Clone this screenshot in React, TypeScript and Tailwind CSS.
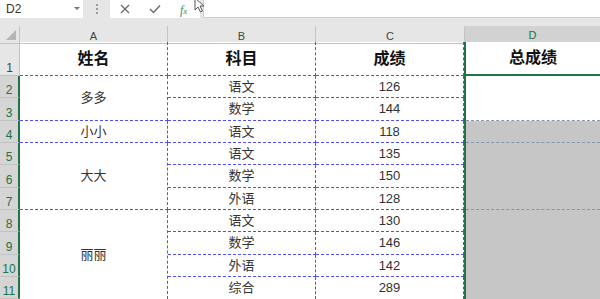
import React from "react";

type Cell = { cls: string; text?: string; bold?: boolean };

const rowNums = [
  "row-start-1",
  "row-start-2",
  "row-start-3",
  "row-start-4",
  "row-start-5",
  "row-start-6",
  "row-start-7",
  "row-start-8",
  "row-start-9",
  "row-start-10",
  "row-start-11",
];

const subjects = ["科目", "语文", "数学", "语文", "语文", "数学", "外语", "语文", "数学", "外语", "综合"];
const scores = ["成绩", "126", "144", "118", "135", "150", "128", "130", "146", "142", "289"];

function DCell({ cls, gray, sep }: { cls: string; gray: boolean; sep: boolean }) {
  return (
    <div
      className={
        "col-start-5 flex flex-col border-l-2 border-solid border-l-[#217346] " +
        cls +
        (gray ? " bg-[#c6c6c6]" : " bg-white")
      }
    >
      {sep && <div className="mt-auto border-b border-dashed border-b-[#8797a6]" />}
    </div>
  );
}

export default function App() {
  const aCells: Cell[] = [
    { cls: "row-start-1 row-span-1 border-b border-b-[#5252f2]", text: "姓名", bold: true },
    { cls: "row-start-2 row-span-2 border-b border-b-[#5252f2]", text: "多多" },
    { cls: "row-start-4 row-span-1 border-b border-b-[#5252f2]", text: "小小" },
    { cls: "row-start-5 row-span-3 border-b border-b-[#5252f2]", text: "大大" },
    { cls: "row-start-8 row-span-4", text: "丽丽" },
  ];

  return (
    <div className="w-[600px] h-[299px] overflow-hidden bg-[#e6e6e6] font-['Liberation_Sans','Noto_Sans_CJK_SC',sans-serif] select-none">
      {/* formula bar */}
      <div className="flex h-[26px] items-start">
        <div className="relative flex h-[18px] w-[83px] items-center bg-white pl-[6px] text-[12px] text-[#333]">
          D2
          <span className="absolute right-[3px] top-[7px] h-0 w-0 border-x-[3px] border-t-[3px] border-x-transparent border-t-[#777]" />
        </div>
        <div className="flex h-[18px] w-[27px] flex-col items-center justify-center gap-[2px]">
          <span className="h-[2px] w-[2px] bg-[#9a9a9a]" />
          <span className="h-[2px] w-[2px] bg-[#9a9a9a]" />
          <span className="h-[2px] w-[2px] bg-[#9a9a9a]" />
        </div>
        <div className="relative h-[18px] w-[90px] bg-white">
          <svg className="absolute top-[4px] left-[10px]" width="10" height="10" viewBox="0 0 10 10">
            <path d="M1 1 L9 9 M9 1 L1 9" stroke="#6a6a6a" strokeWidth="1.3" fill="none" />
          </svg>
          <svg className="absolute top-[4px] left-[39px]" width="12" height="10" viewBox="0 0 12 10">
            <path d="M1 5 L4.5 8.5 L11 1.5" stroke="#6a6a6a" strokeWidth="1.4" fill="none" />
          </svg>
          <span className="absolute top-[1px] left-[70px] font-['Liberation_Serif',serif] text-[12px] italic text-[#3a8a5a]">
            f<span className="text-[9px]">x</span>
          </span>
          <svg className="absolute top-[-2px] left-[84px]" width="12" height="16" viewBox="0 0 12 16">
            <path d="M1 0 L1 12 L4 9 L6.5 14 L8.5 13 L6 8 L10 8 Z" fill="#fff" stroke="#555" strokeWidth="1" />
          </svg>
        </div>
        <div className="ml-[3px] h-[18px] flex-1 border-b border-l border-[#d0d0d0] bg-white" />
      </div>

      {/* column headers */}
      <div className="grid h-[16px] grid-cols-[20px_148px_148px_148px_136px] text-[11px] leading-[14px]">
        <div className="relative border-b border-r border-[#c4c4c4]">
          <span className="absolute bottom-[3px] right-[3px] h-0 w-0 border-b-[10px] border-l-[10px] border-b-[#b5b5b5] border-l-transparent" />
        </div>
        <div className="flex items-center justify-center border-b border-r border-[#c4c4c4] pt-[2px] text-[#444]">A</div>
        <div className="flex items-center justify-center border-b border-r border-[#c4c4c4] pt-[2px] text-[#444]">B</div>
        <div className="flex items-center justify-center border-b border-[#c4c4c4] pt-[2px] text-[#444]">C</div>
        <div className="flex items-center justify-center border-b-2 border-l border-b-[#217346] border-l-[#c4c4c4] bg-[#d2d2d2] pt-[2px] text-[#217346]">D</div>
      </div>

      {/* sheet grid */}
      <div className="grid grid-cols-[20px_148px_148px_148px_136px] grid-rows-[34px_22px_23px_22px_22px_23px_22px_22px_23px_22px_22px] bg-white">
        {rowNums.map((r, i) => (
          <div
            key={"n" + i}
            className={
              "col-start-1 flex items-end justify-center pb-[1px] text-[12px] leading-[12px] " +
              r +
              (i === 0
                ? " border-b border-r border-[#c4c4c4] bg-[#e6e6e6] text-[#444]"
                : " border-b border-r-2 border-b-[#c2c2c2] border-r-[#217346] bg-[#d5d5d5] text-[#217346]")
            }
          >
            {i + 1}
          </div>
        ))}

        {aCells.map((c, i) => (
          <div
            key={"a" + i}
            className={
              "col-start-2 flex items-center justify-center border-r border-dashed border-r-[#5252f2] " +
              c.cls +
              (c.bold ? " text-[16px] font-bold text-[#111]" : " text-[13px] text-[#333]")
            }
          >
            {c.text}
          </div>
        ))}

        {subjects.map((s, i) => (
          <div
            key={"b" + i}
            className={
              "col-start-3 flex items-center justify-center border-r border-dashed border-r-[#5252f2] " +
              rowNums[i] +
              (i < 10 ? " border-b border-b-[#5252f2]" : "") +
              (i === 0 ? " text-[16px] font-bold text-[#111]" : " text-[13px] text-[#333]")
            }
          >
            {s}
          </div>
        ))}

        {scores.map((s, i) => (
          <div
            key={"c" + i}
            className={
              "col-start-4 flex items-center justify-center border-r border-dashed border-r-[#5252f2] " +
              rowNums[i] +
              (i < 10 ? " border-b border-b-[#5252f2]" : "") +
              (i === 0 ? " text-[16px] font-bold text-[#111]" : " text-[13px] text-[#333]")
            }
          >
            {s}
          </div>
        ))}

        <div className="col-start-5 row-start-1 flex items-center justify-center border-b-2 border-l-2 border-solid border-[#217346] bg-white text-[16px] font-bold text-[#111]">
          总成绩
        </div>
        <DCell cls="row-start-2 row-span-2" gray={false} sep={true} />
        <DCell cls="row-start-4 row-span-1" gray={true} sep={true} />
        <DCell cls="row-start-5 row-span-3" gray={true} sep={true} />
        <DCell cls="row-start-8 row-span-4" gray={true} sep={false} />
      </div>
    </div>
  );
}
